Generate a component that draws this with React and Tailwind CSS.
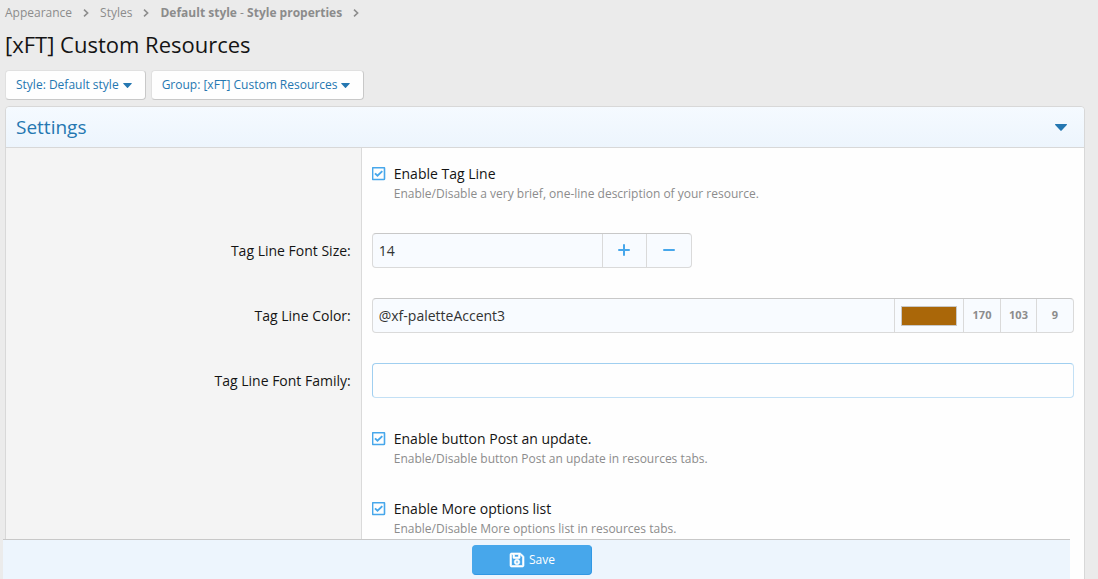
import { useState } from 'react';
import { FaRegSave } from 'react-icons/fa';

const Chevron = () => (
  <svg viewBox="0 0 6 8" className="w-1.5 h-2" fill="none" stroke="#8c8c8c" strokeWidth="1.6" aria-hidden="true">
    <path d="M1 0.7 4.6 4 1 7.3" />
  </svg>
);

const Crumb = ({ href, children }) => (
  <li className="flex items-center gap-[11px]">
    <a href={href}>{children}</a>
    <Chevron />
  </li>
);

const Caret = ({ className }) => (
  <svg viewBox="0 0 12 7" className={className} fill="currentColor" aria-hidden="true">
    <path d="M0.6 0h10.8c.6 0 .8.6.4 1L6.6 6.6c-.3.4-.9.4-1.2 0L.2 1C-.2.6 0 0 .6 0z" />
  </svg>
);

const MenuButton = ({ children }) => (
  <button type="button" className="h-[30px] pl-2.5 pr-[13px] flex items-center gap-1 bg-[#fefefe] border border-t-[#e0e0e0] border-l-[#e0e0e0] border-r-[#c8c8c8] border-b-[#c8c8c8] rounded text-[#2577b1] text-[12px]">
    <span>{children}</span>
    <Caret className="w-[9px] h-[5px]" />
  </button>
);

const Row = ({ label, htmlFor, children }) => (
  <div className="flex">
    <div className="w-[33%] shrink-0 px-2.5 pt-[15px] bg-[#f4f4f4] border-r border-[#dadada] text-right">
      {label && <label htmlFor={htmlFor} className="leading-[35px]">{label}</label>}
    </div>
    <div className="flex-1 min-w-0 px-2.5 py-[15px]">{children}</div>
  </div>
);

const CheckRow = ({ id, label, hint }) => {
  const [checked, setChecked] = useState(true);

  return (
    <Row>
      <div className="flex gap-2">
        <span className="relative w-3.5 h-3.5 mt-1 shrink-0 text-[#47a7eb]">
          <input id={id} type="checkbox" checked={checked} onChange={(e) => setChecked(e.target.checked)} aria-describedby={`${id}-hint`} className="block appearance-none w-3.5 h-3.5" />
          <svg viewBox="0 0 14 14" className="absolute inset-0 pointer-events-none" fill="none" stroke="currentColor">
            <rect x="0.6" y="0.6" width="11.9" height="11.9" rx="0.8" strokeWidth="1.6" />
            {checked && <path d="M3 6.4 5.5 8.8 10.3 4.1" strokeWidth="1.9" />}
          </svg>
        </span>
        <div>
          <label htmlFor={id} className="block leading-[22px]">{label}</label>
          <p id={`${id}-hint`} className="text-[12px] leading-[18px] text-[#8c8c8c]">{hint}</p>
        </div>
      </div>
    </Row>
  );
};

export default function App() {
  const [fontSize, setFontSize] = useState(14);
  const [color, setColor] = useState('@xf-paletteAccent3');
  const [fontFamily, setFontFamily] = useState('');

  return (
    <div className="h-screen overflow-hidden bg-[#ebebeb] text-[#141414] text-[14px] font-['Segoe_UI','Open_Sans',sans-serif]">
      <main className="pl-[5px] pr-[13px]">
        <nav aria-label="Breadcrumb" className="pt-[3px]">
          <ol className="flex gap-[11px] text-[12px] leading-5 text-[#8c8c8c]">
            <Crumb href="#appearance">Appearance</Crumb>
            <Crumb href="#styles">Styles</Crumb>
            <Crumb href="#properties"><b>Default style</b> - <b>Style properties</b></Crumb>
          </ol>
        </nav>
        <h1 className="mt-[5px] text-[22px] leading-8">[xFT] Custom Resources</h1>

        <div className="mt-2.5 flex gap-[5px]">
          <MenuButton>Style: Default style</MenuButton>
          <MenuButton>Group: [xFT] Custom Resources</MenuButton>
        </div>

        <form onSubmit={(e) => e.preventDefault()}>
          <section className="mt-1.5 pb-10 bg-[#fefefe] border border-[#d8d8d8] rounded">
            <h2 className="border-b border-[#d8d8d8] text-[#2577b1]">
              <button type="button" className="w-full h-10 pl-2.5 pr-[17px] flex items-center justify-between rounded-t bg-linear-to-b from-[#f5faff] to-[#edf5fd] text-[19px]">
                <span>Settings</span>
                <Caret className="w-3 h-[7px]" />
              </button>
            </h2>

            <CheckRow id="tagLine" label="Enable Tag Line" hint="Enable/Disable a very brief, one-line description of your resource." />

            <Row label="Tag Line Font Size:" htmlFor="fontSize">
              <div className="w-80 h-[35px] flex bg-[#f8fbff] border border-[#dadada] border-t-[#c8c8c8] rounded overflow-hidden">
                <input id="fontSize" value={fontSize} onChange={(e) => setFontSize(Number(e.target.value) || 0)} className="flex-1 min-w-0 px-1.5 text-[#333] outline-none" />
                <button type="button" aria-label="Increase" onClick={() => setFontSize(fontSize + 1)} className="w-11 pb-0.5 grid place-items-center border-l border-[#dadada] text-[#47a7eb]">
                  <svg viewBox="0 0 12 12" className="w-3 h-3" stroke="currentColor" strokeWidth="2" strokeLinecap="round"><path d="M1 6h10M6 1v10" /></svg>
                </button>
                <button type="button" aria-label="Decrease" onClick={() => setFontSize(fontSize - 1)} className="w-[45px] pb-0.5 grid place-items-center border-l border-[#dadada] text-[#47a7eb]">
                  <svg viewBox="0 0 12 12" className="w-3 h-3" stroke="currentColor" strokeWidth="2" strokeLinecap="round"><path d="M1 6h10" /></svg>
                </button>
              </div>
            </Row>

            <Row label="Tag Line Color:" htmlFor="color">
              <div className="h-[35px] flex bg-[#f8fbff] border border-[#dadada] border-t-[#c8c8c8] rounded overflow-hidden text-[#8c8c8c] text-[11px] font-bold">
                <input id="color" value={color} onChange={(e) => setColor(e.target.value)} className="flex-1 min-w-0 px-1.5 text-[14px] font-normal text-[#333] outline-none" />
                <button type="button" aria-label="Pick a color" className="w-[69px] px-1.5 flex items-center border-l border-[#dadada]">
                  <span className="flex-1 h-5 bg-[#aa6709] border border-[#c8c8c8]" />
                </button>
                <span className="w-[37px] grid place-items-center border-l border-[#dadada]">170</span>
                <span className="w-9 grid place-items-center border-l border-[#dadada]">103</span>
                <span className="w-[37px] grid place-items-center border-l border-[#dadada]">9</span>
              </div>
            </Row>

            <Row label="Tag Line Font Family:" htmlFor="fontFamily">
              <input id="fontFamily" value={fontFamily} onChange={(e) => setFontFamily(e.target.value)} className="block w-full h-[35px] px-1.5 bg-[#fefefe] border border-[#c3e0f5] border-t-[#a0cff0] border-l-[#a0cff0] rounded outline-none" />
            </Row>

            <CheckRow id="postUpdate" label="Enable button Post an update." hint="Enable/Disable button Post an update in resources tabs." />
            <CheckRow id="moreOptions" label="Enable More options list" hint="Enable/Disable More options list in resources tabs." />
          </section>

          <div className="fixed bottom-0 left-[3px] right-7 h-10 pt-[5px] pr-[9px] flex justify-center items-start bg-[#edf5fd] border-t border-[#c8c8c8]">
            <button type="submit" className="w-[120px] h-[30px] flex items-center justify-center gap-1 rounded bg-[#47a7eb] border border-[#47a7eb] border-r-[#3198e4] border-b-[#3198e4] text-white text-[12px]">
              <FaRegSave className="w-4 h-4" stroke="currentColor" strokeWidth="20" />
              <span>Save</span>
            </button>
          </div>
        </form>
      </main>
    </div>
  );
}
